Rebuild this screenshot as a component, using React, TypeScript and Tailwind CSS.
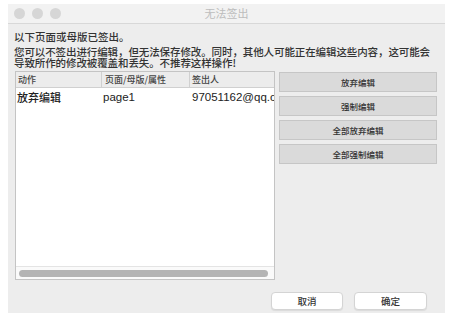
import React from 'react';

const SIDE_ACTIONS = ['放弃编辑', '强制编辑', '全部放弃编辑', '全部强制编辑'];

const ROWS = [{ action: '放弃编辑', page: 'page1', owner: '97051162@qq.com' }];

export default function App() {
  return (
    <div
      className="w-[454px] h-[321px] bg-white pt-[4px] pl-[8px]"
      style={{ fontFamily: '"Noto Sans CJK SC", "Noto Sans", sans-serif' }}
    >
      <div className="w-[437px] h-[309px] bg-[#ededed] flex flex-col">
        {/* title bar */}
        <div className="h-[20px] bg-[#f2f2f2] border-b border-[#d8d8d8] flex items-center relative">
          <div className="flex gap-[7px] pl-[6px]">
            <span className="w-[11px] h-[11px] rounded-full bg-[#d6d6d6]" />
            <span className="w-[11px] h-[11px] rounded-full bg-[#d6d6d6]" />
            <span className="w-[11px] h-[11px] rounded-full bg-[#d6d6d6]" />
          </div>
          <div className="absolute inset-0 flex items-center justify-center text-[11px] text-[#bdbdbd]">
            无法签出
          </div>
        </div>

        {/* message */}
        <div className="pl-[6px] pr-[6px] pt-[6px] text-[10.5px] text-[#333] font-medium">
          <p className="leading-[13px]">以下页面或母版已签出。</p>
          <p className="leading-[11px] mt-[3px] tracking-[-0.1px]">
            您可以不签出进行编辑，但无法保存修改。同时，其他人可能正在编辑这些内容，这可能会导致所作的修改被覆盖和丢失。不推荐这样操作!
          </p>
        </div>

        <div className="flex pl-[7px] mt-[3px] gap-[4px]">
          {/* table */}
          <div className="w-[260px] h-[209px] bg-white border border-[#c4c4c4] flex flex-col overflow-hidden">
            <div className="flex h-[16px] bg-[#ececec] border-b border-[#d0d0d0] text-[9px] text-[#444] font-medium">
              <div className="w-[86px] pl-[2px] flex items-center border-r border-[#d0d0d0]">动作</div>
              <div className="w-[88px] pl-[3px] flex items-center border-r border-[#d0d0d0]">页面/母版/属性</div>
              <div className="flex-1 pl-[2px] flex items-center">签出人</div>
            </div>
            <div className="flex-1">
              {ROWS.map((r) => (
                <div key={r.page} className="flex h-[19px] items-center text-[11px] text-[#222] font-medium whitespace-nowrap">
                  <div className="w-[86px] pl-[1px]">{r.action}</div>
                  <div
                    className="w-[88px] pl-[1px] text-[11.5px]"
                    style={{ fontFamily: '"Liberation Sans", Arial, sans-serif' }}
                  >
                    {r.page}
                  </div>
                  <div
                    className="flex-1 overflow-hidden pl-[2px] text-[11.5px]"
                    style={{ fontFamily: '"Liberation Sans", Arial, sans-serif' }}
                  >
                    {r.owner}
                  </div>
                </div>
              ))}
            </div>
            <div className="h-[13px] border-t border-[#e4e4e4] bg-[#fafafa] flex items-center px-[3px]">
              <div className="w-[249px] h-[7px] rounded-full bg-[#b4b4b4]" />
            </div>
          </div>

          {/* side actions */}
          <div className="flex flex-col gap-[4px] pt-[1px]">
            {SIDE_ACTIONS.map((a) => (
              <button
                key={a}
                className="w-[158px] h-[20px] bg-[#dadada] border border-[#c6c6c6] text-[8.5px] text-[#333] font-medium flex items-center justify-center"
              >
                {a}
              </button>
            ))}
          </div>
        </div>

        {/* footer */}
        <div className="flex justify-end gap-[11px] pr-[18px] mt-[12px]">
          <button className="w-[72px] h-[18px] bg-white border border-[#d4d4d4] rounded-[4px] text-[9.5px] text-[#333] font-medium shadow-[0_1px_1px_rgba(0,0,0,0.08)]">
            取消
          </button>
          <button className="w-[73px] h-[18px] bg-white border border-[#d4d4d4] rounded-[4px] text-[9.5px] text-[#333] font-medium shadow-[0_1px_1px_rgba(0,0,0,0.08)]">
            确定
          </button>
        </div>
      </div>
    </div>
  );
}
